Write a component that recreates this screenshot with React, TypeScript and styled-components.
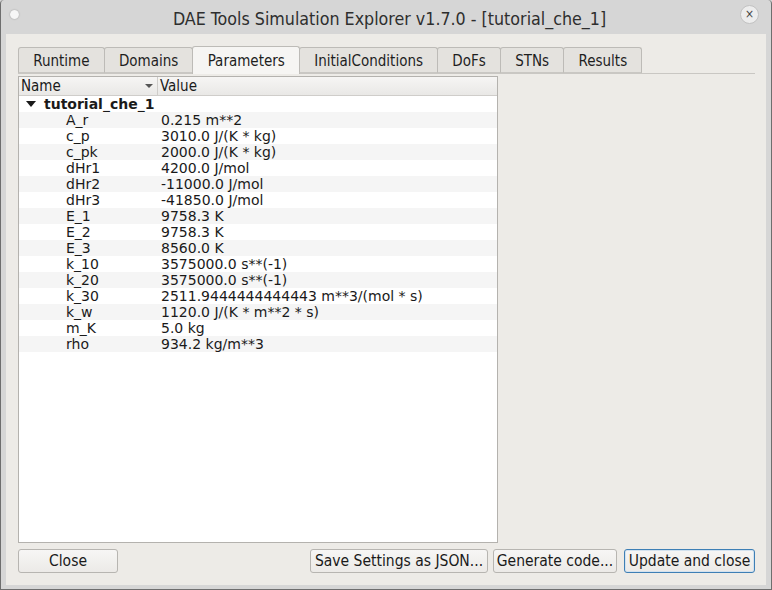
import React, {useState} from 'react';
import styled, {createGlobalStyle} from 'styled-components';

const GlobalStyle = createGlobalStyle`
  html, body {
    margin: 0;
    padding: 0;
    background: #d6d6d6;
  }
  * { box-sizing: border-box; }
`;

const Window = styled.div`
  width: 772px;
  height: 590px;
  display: flex;
  flex-direction: column;
  background: #d6d6d6;
  border-left: 1px solid #6e6e6e;
  border-right: 1px solid #6e6e6e;
  border-bottom: 1px solid #6e6e6e;
  border-radius: 4px 4px 0 0;
  font-family: "DejaVu Sans Condensed", "DejaVu Sans", sans-serif;
`;

const TitleBar = styled.div`
  height: 34px;
  flex: none;
  display: flex;
  align-items: center;
  justify-content: space-between;
  padding: 0 12px 0 9px;
  color: #2e2e2e;
  font-size: 17.7px;
`;

const Dot = styled.div`
  width: 9px;
  height: 9px;
  border-radius: 50%;
  background: #f6f6f6;
  box-shadow: 0 0 1.5px #8a8a8a;
  margin-top: -6px;
`;

const CloseCircle = styled.div`
  width: 19px;
  height: 19px;
  border-radius: 50%;
  background: #ededed;
  border: 1px solid #c2c2c2;
  display: flex;
  align-items: center;
  justify-content: center;
  color: #444;
  font-size: 12px;
  line-height: 1;
  margin-top: -6px;
`;

const Title = styled.div`
  flex: 1;
  text-align: center;
  margin-top: 3px;
  margin-left: 20px;
`;

const Body = styled.div`
  flex: 1;
  margin: 0 5px 4px 5px;
  background: #edebe7;
  padding: 13px 11px 12px 12px;
  display: flex;
  flex-direction: column;
`;

const TabBar = styled.div`
  display: flex;
  align-items: flex-end;
  height: 27px;
  border-bottom: 1px solid #c9c7c3;
`;

const Tab = styled.div<{$active?: boolean}>`
  height: ${p => (p.$active ? '28px' : '26px')};
  margin-bottom: ${p => (p.$active ? '-1px' : '0')};
  padding: ${p => (p.$active ? '0' : '2px')} 14.2px 0;
  display: flex;
  align-items: center;
  justify-content: center;
  font-size: 15px;
  color: #1e1e1e;
  background: ${p => (p.$active ? '#f6f5f3' : '#e4e2de')};
  border: 1px solid #bdbbb7;
  border-bottom: ${p => (p.$active ? 'none' : '1px solid #c9c7c3')};
  border-radius: 3px 3px 0 0;
  margin-left: -1px;
  &:first-child { margin-left: 0; }
`;

const Pane = styled.div`
  flex: 1;
  display: flex;
  flex-direction: column;
  padding-top: 2px;
`;

const Tree = styled.div`
  width: 480px;
  height: 467px;
  background: #ffffff;
  border: 1px solid #b4b2ae;
  font-family: "DejaVu Sans", sans-serif;
  font-size: 14px;
  color: #1a1a1a;
  display: flex;
  flex-direction: column;
`;

const HeaderRow = styled.div`
  display: grid;
  grid-template-columns: 139px 1fr;
  height: 19px;
  flex: none;
  background: linear-gradient(#f6f5f4, #e9e8e6);
  border-bottom: 1px solid #cfcdca;
  font-family: "DejaVu Sans Condensed", "DejaVu Sans", sans-serif;
  font-size: 15px;
`;

const HeaderCell = styled.div`
  display: flex;
  align-items: center;
  justify-content: space-between;
  padding: 0 4px 0 2px;
  border-right: 1px solid #cfcdca;
  line-height: 18px;
  &:last-child { border-right: none; }
`;

const SortArrow = styled.span`
  width: 0;
  height: 0;
  border-left: 4px solid transparent;
  border-right: 4px solid transparent;
  border-top: 4px solid #555;
`;

const Row = styled.div<{$alt?: boolean}>`
  display: grid;
  grid-template-columns: 139px 1fr;
  height: 16px;
  flex: none;
  line-height: 16px;
  background: ${p => (p.$alt ? '#f5f5f5' : '#ffffff')};
  white-space: nowrap;
`;

const NameCell = styled.div<{$indent: number; $bold?: boolean}>`
  padding-left: ${p => p.$indent}px;
  font-weight: ${p => (p.$bold ? 'bold' : 'normal')};
  display: flex;
  align-items: center;
`;

const ValueCell = styled.div`
  padding-left: 3px;
`;

const Expander = styled.span`
  width: 0;
  height: 0;
  border-left: 5px solid transparent;
  border-right: 5px solid transparent;
  border-top: 6px solid #1a1a1a;
  margin-right: 8px;
`;

const Footer = styled.div`
  display: flex;
  align-items: center;
  margin-top: 4px;
`;

const Button = styled.button<{$focus?: boolean; $gap?: number; $width: number}>`
  height: 24px;
  width: ${p => p.$width}px;
  margin-left: ${p => p.$gap ?? 0}px;
  padding: 0;
  white-space: nowrap;
  font-family: "DejaVu Sans Condensed", "DejaVu Sans", sans-serif;
  font-size: 15.5px;
  color: #1a1a1a;
  background: linear-gradient(#f7f6f5, #eceae7);
  border: 1px solid ${p => (p.$focus ? '#3e7fb5' : '#b7b5b1')};
  box-shadow: ${p => (p.$focus ? 'inset 0 0 0 1px #d3e2ef' : 'none')};
  border-radius: 3px;
`;

const Spacer = styled.div`
  flex: 1;
`;

const tabs = ['Runtime', 'Domains', 'Parameters', 'InitialConditions', 'DoFs', 'STNs', 'Results'];

const params: [string, string][] = [
  ['A_r', '0.215 m**2'],
  ['c_p', '3010.0 J/(K * kg)'],
  ['c_pk', '2000.0 J/(K * kg)'],
  ['dHr1', '4200.0 J/mol'],
  ['dHr2', '-11000.0 J/mol'],
  ['dHr3', '-41850.0 J/mol'],
  ['E_1', '9758.3 K'],
  ['E_2', '9758.3 K'],
  ['E_3', '8560.0 K'],
  ['k_10', '3575000.0 s**(-1)'],
  ['k_20', '3575000.0 s**(-1)'],
  ['k_30', '2511.9444444444443 m**3/(mol * s)'],
  ['k_w', '1120.0 J/(K * m**2 * s)'],
  ['m_K', '5.0 kg'],
  ['rho', '934.2 kg/m**3'],
];

function App() {
  const [tab, setTab] = useState('Parameters');

  return (
    <Window>
      <GlobalStyle/>
      <TitleBar>
        <Dot/>
        <Title>DAE Tools Simulation Explorer v1.7.0 - [tutorial_che_1]</Title>
        <CloseCircle>×</CloseCircle>
      </TitleBar>
      <Body>
        <TabBar>
          {tabs.map(t =>
            <Tab key={t} $active={t === tab} onClick={() => setTab(t)}>{t}</Tab>
          )}
        </TabBar>
        <Pane>
          <Tree>
            <HeaderRow>
              <HeaderCell>Name <SortArrow/></HeaderCell>
              <HeaderCell>Value</HeaderCell>
            </HeaderRow>
            <Row>
              <NameCell $indent={7} $bold><Expander/>tutorial_che_1</NameCell>
              <ValueCell/>
            </Row>
            {params.map(([name, value], i) =>
              <Row key={name} $alt={i % 2 === 0}>
                <NameCell $indent={47}>{name}</NameCell>
                <ValueCell>{value}</ValueCell>
              </Row>
            )}
          </Tree>
        </Pane>
        <Footer>
          <Button $width={100}>Close</Button>
          <Spacer/>
          <Button $width={178}>Save Settings as JSON...</Button>
          <Button $width={124} $gap={5}>Generate code...</Button>
          <Button $width={131} $gap={7} $focus>Update and close</Button>
        </Footer>
      </Body>
    </Window>
  );
}

export default App;
